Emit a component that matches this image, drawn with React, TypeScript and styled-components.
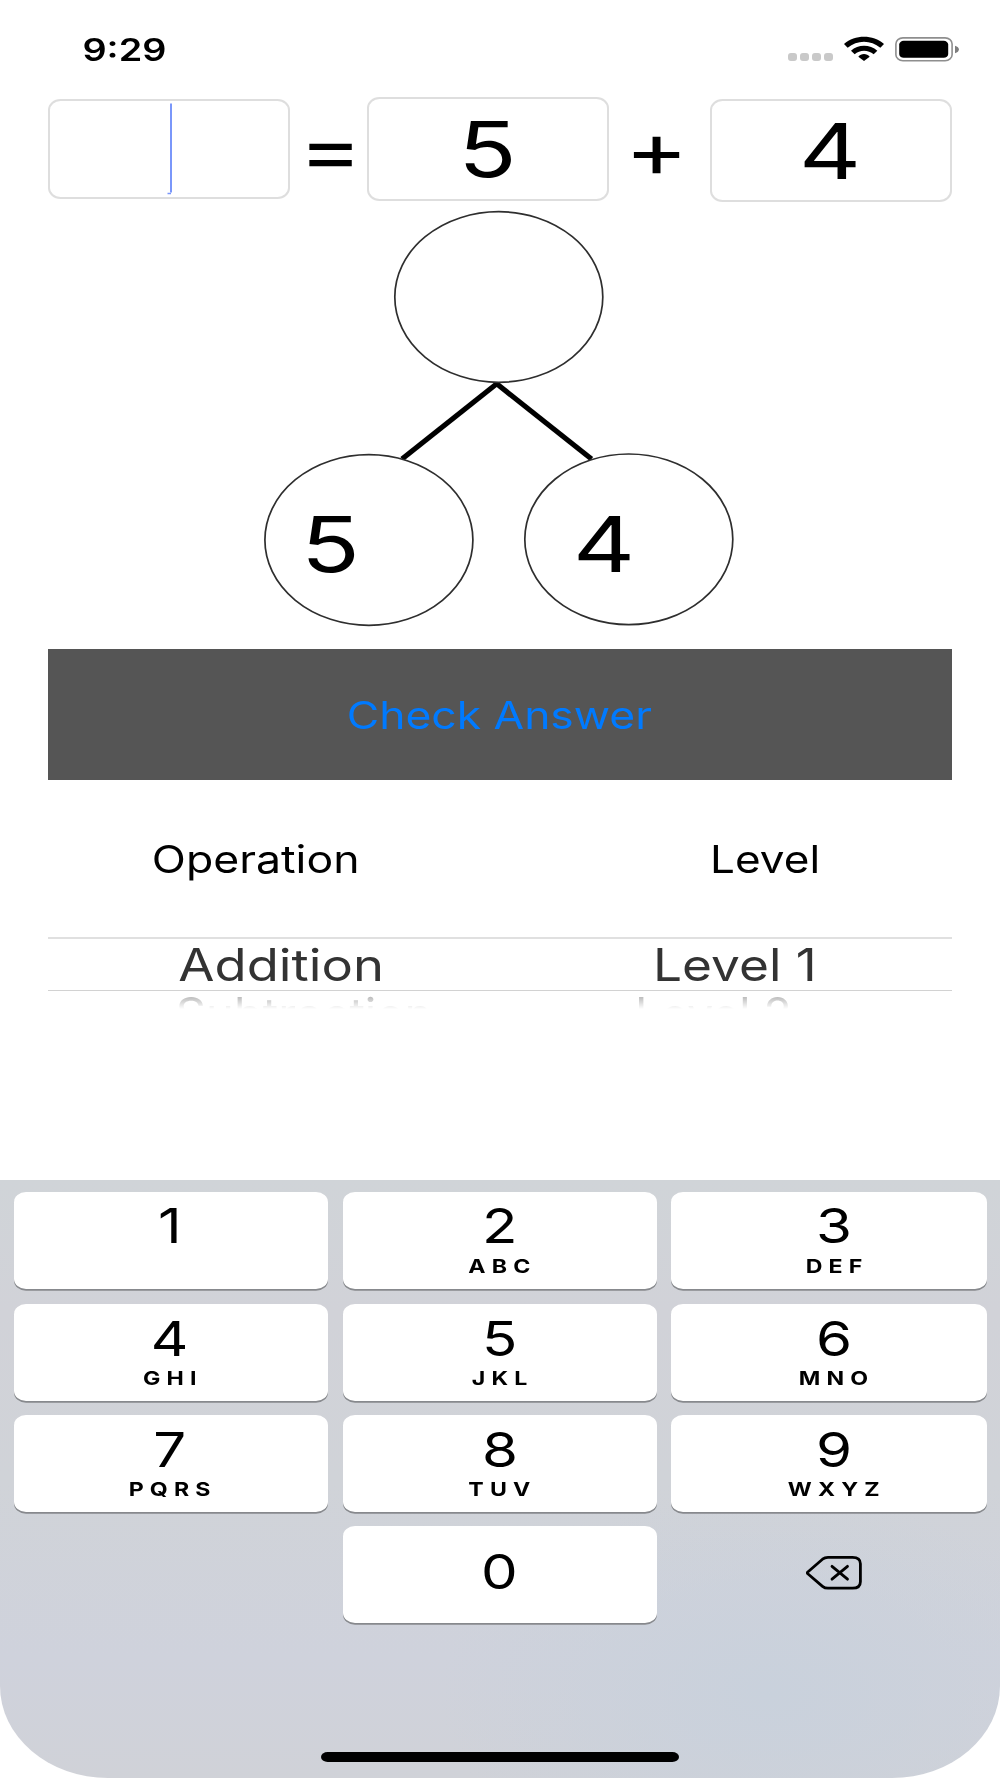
import React from "react";
import styled, { createGlobalStyle } from "styled-components";

const GlobalStyle = createGlobalStyle`
  body {
    margin: 0;
    background: #fff;
  }
  * {
    box-sizing: border-box;
  }
`;

const Screen = styled.main`
  width: 1000px;
  height: 1778px;
  display: flex;
  flex-direction: column;
  overflow: hidden;
  background: #fff;
  color: #000;
  font-family: Inter, "Liberation Sans", sans-serif;
`;

/* Text with the wide letterforms used across the whole screen. */
const Wide = styled.span<{ $stretch?: number; $shift?: number }>`
  display: inline-block;
  white-space: nowrap;
  margin-left: ${(p) => (p.$shift ?? 0) * 2}px;
  transform: scaleX(${(p) => p.$stretch ?? 1.2});
`;

const StatusBar = styled.header`
  height: 97px;
  flex: none;
  display: flex;
  justify-content: space-between;
  padding: 29px 40px 0 74.5px;
`;

const Clock = styled.div`
  width: 100px;
  padding-top: 1px;
  text-align: center;
  font-size: 31px;
  font-weight: 600;
  line-height: 40px;
`;

const StatusIcons = styled.div`
  display: flex;
  align-items: flex-start;
  padding-top: 7px;
`;

const SignalDots = styled.div`
  display: flex;
  gap: 3px;
  margin: 17px 11px 0 0;
`;

const SignalDot = styled.i`
  width: 9px;
  height: 7.5px;
  border-radius: 3px;
  background: #c9c9c9;
`;

const EquationRow = styled.section`
  flex: none;
  height: 104px;
  display: flex;
  align-items: flex-start;
  padding-left: 48px;
`;

const Field = styled.div<{ $top?: number; $height: number }>`
  width: 242px;
  height: ${(p) => p.$height}px;
  margin-top: ${(p) => p.$top ?? 0}px;
  flex: none;
  display: flex;
  align-items: center;
  justify-content: center;
  border: 2px solid #dedede;
  border-radius: 12.5px / 11px;
  font-size: 77.5px;
  line-height: 90px;
`;

const Sign = styled.div<{ $width: number }>`
  width: ${(p) => p.$width}px;
  flex: none;
  text-align: center;
  font-size: 77.5px;
  line-height: 105px;
`;

const Caret = styled.svg`
  width: 6px;
  height: 92px;
`;

const Bond = styled.svg`
  flex: none;
  display: block;
  width: 1000px;
  height: 448px;
  font-size: 77.5px;
`;

const CheckButton = styled.button`
  flex: none;
  height: 130.5px;
  margin: 0 48px;
  padding: 1px 0 0;
  border: 0;
  background: #555;
  color: #007aff;
  font: 400 38.5px/130px Inter, "Liberation Sans", sans-serif;
`;

const Headings = styled.div`
  flex: none;
  height: 157.5px;
  display: flex;
  padding: 54.5px 0 0 105.5px;
  font-size: 38.5px;
  line-height: 50px;
`;

const Heading = styled.div<{ $left?: number; $width: number }>`
  width: ${(p) => p.$width}px;
  margin-left: ${(p) => p.$left ?? 0}px;
  text-align: center;
`;

const Picker = styled.section`
  flex: none;
  margin: 0 48px;
  height: 243px;
  font-size: 44.5px;
`;

const PickerRow = styled.div`
  height: 54px;
  display: flex;
  border-top: 2px solid #e0e0e0;
  border-bottom: 1px solid #d2d2d2;
  color: #333;
  line-height: 53px;
`;

const PickerNextRow = styled.div`
  height: 18px;
  display: flex;
  overflow: hidden;
  color: #b4b4b4;
  line-height: 47px;
  mask-image: linear-gradient(#000 25%, rgba(0, 0, 0, 0.12) 90%, transparent);
`;

const PickerCell = styled.div<{ $left?: number; $width: number }>`
  width: ${(p) => p.$width}px;
  margin-left: ${(p) => p.$left ?? 0}px;
  display: flex;
  justify-content: center;
`;

const Keyboard = styled.section`
  position: relative;
  flex: 1;
  padding: 12.4px 13px 0 14.4px;
  border-radius: 0 0 108px 108px / 0 0 92px 92px;
  background:
    radial-gradient(ellipse 330px 200px at 77% 86%, #c9d1dc 0%, #c9d1dc00 100%),
    linear-gradient(#d0d4d8, #d1d2d8 22%, #d0d3d8 50%, #cfd2dc 80%, #d0d2d8);
`;

const KeyGrid = styled.div`
  display: grid;
  grid-template-columns: 314px 314px 315.5px;
  grid-auto-rows: 97px;
  gap: 14.2px 14.4px;
`;

const Key = styled.div<{ $top: number; $offset: number; $blank?: boolean }>`
  display: flex;
  flex-direction: column;
  align-items: center;
  padding-top: ${(p) => p.$top}px;
  padding-left: ${(p) => Math.max(0, p.$offset * 2)}px;
  padding-right: ${(p) => Math.max(0, -p.$offset * 2)}px;
  border-radius: 12px / 10px;
  background: ${(p) => (p.$blank ? "transparent" : "#fff")};
  box-shadow: ${(p) => (p.$blank ? "none" : "0 1.7px 0 #87898d")};
`;

const Digit = styled.div`
  height: 50px;
  font-size: 48.5px;
  line-height: 50px;
`;

const Letters = styled.div<{ $gap: number }>`
  margin-top: ${(p) => p.$gap}px;
  padding-left: 5.5px;
  font-size: 19.3px;
  font-weight: 700;
  letter-spacing: 5.1px;
  line-height: 20px;
`;

const HomeIndicator = styled.div`
  position: absolute;
  left: 321px;
  bottom: 16px;
  width: 358px;
  height: 10.5px;
  border-radius: 7px / 5.25px;
  background: #000;
`;

const WifiIcon = () => (
  <svg width="40" height="25" viewBox="222 48 120 75">
    <path d="M222 72C255 43 309 43 342 72L331 83C303 59 261 59 233 83Z" />
    <path d="M243 92C264 72 300 72 322 92L311 103C295 89 269 89 254 103Z" />
    <path d="M265 110C273 99 291 99 299 110L282 123Z" />
  </svg>
);

const Battery = styled.svg`
  width: 65px;
  height: 26px;
  margin-left: 11px;
`;

const BatteryIcon = () => (
  <Battery viewBox="0 0 65 26">
    <rect x="0.9" y="1.9" width="56.2" height="22.8" rx="7" ry="6" fill="none" stroke="#8e8e8e" strokeWidth="1.6" />
    <rect x="4.2" y="4.8" width="49" height="17" rx="4.5" ry="3.8" />
    <path d="M60 9.8C65.200 11.200 65.200 15.800 60 17.200Z" fill="#7d7d7d" />
  </Battery>
);

const BackspaceIcon = () => (
  <svg width="56" height="34" viewBox="0 0 56 34" fill="none" stroke="#000" strokeWidth="2.800" strokeLinecap="round" strokeLinejoin="round">
    <path d="M1.800 16L16.500 3.200Q18.800 1.400 22 1.400H46.500Q54.400 1.400 54.400 7.800V25.700Q54.400 32.200 46.500 32.200H22Q18.800 32.200 16.500 30.300L1.800 17.800Q.8 16.900 1.800 16Z" />
    <path d="M26 10.300L41.500 23.200M41.500 10.300L26 23.200" />
  </svg>
);

const keys = [
  ["1", ""], ["2", "ABC"], ["3", "DEF"],
  ["4", "GHI"], ["5", "JKL"], ["6", "MNO"],
  ["7", "PQRS"], ["8", "TUV"], ["9", "WXYZ"],
];

/* Labels sit slightly off the key centres in the outer columns. */
const columnOffsets = [-1.5, 0, 5];

export default function App() {
  return (
    <Screen>
      <GlobalStyle />
      <StatusBar>
        <Clock>
          <Wide $stretch={1.22}>9:29</Wide>
        </Clock>
        <StatusIcons>
          <SignalDots>
            <SignalDot />
            <SignalDot />
            <SignalDot />
            <SignalDot />
          </SignalDots>
          <WifiIcon />
          <BatteryIcon />
        </StatusIcons>
      </StatusBar>

      <EquationRow>
        <Field $top={2} $height={100}>
          <Caret viewBox="0 0 6 92" fill="none" stroke="#7a97fa">
            <path d="M5 .5V89.500" strokeWidth="2" />
            <path d="M1.500 90.500H5" strokeWidth="1.500" />
          </Caret>
        </Field>
        <Sign $width={77}>
          <Wide $stretch={1.24} $shift={2.3}>=</Wide>
        </Sign>
        <Field $height={104}>
          <Wide $stretch={1.24}>5</Wide>
        </Field>
        <Sign $width={101}>
          <Wide $stretch={1.24} $shift={-2.4}>+</Wide>
        </Sign>
        <Field $top={2} $height={103.4}>
          <Wide $stretch={1.24} $shift={-0.5}>4</Wide>
        </Field>
      </EquationRow>

      <Bond viewBox="0 201 1000 448">
        <g stroke="#000" strokeWidth="5.200">
          <path d="M498 382.800L402 459" />
          <path d="M495.500 382.800L591.500 459" />
        </g>
        <g fill="#fff" stroke="#2e2e2e" strokeWidth="1.700">
          <ellipse cx="498.800" cy="297" rx="104" ry="85.300" />
          <ellipse cx="368.900" cy="540" rx="104" ry="85.300" />
          <ellipse cx="628.800" cy="539.300" rx="104" ry="85.300" />
        </g>
        <g textAnchor="middle">
          <text transform="translate(330.500 571.700) scale(1.250 1)">5</text>
          <text transform="translate(604 571.700) scale(1.240 1)">4</text>
        </g>
      </Bond>

      <CheckButton>
        <Wide $stretch={1.153} $shift={-0.5}>Check Answer</Wide>
      </CheckButton>

      <Headings>
        <Heading $width={300}>
          <Wide $stretch={1.158}>Operation</Wide>
        </Heading>
        <Heading $left={209.5} $width={300}>
          <Wide $stretch={1.145}>Level</Wide>
        </Heading>
      </Headings>

      <Picker>
        <PickerRow>
          <PickerCell $left={83} $width={300}>
            <Wide $stretch={1.18}>Addition</Wide>
          </PickerCell>
          <PickerCell $left={154} $width={300}>
            <Wide $stretch={1.155}>Level 1</Wide>
          </PickerCell>
        </PickerRow>
        <PickerNextRow>
          <PickerCell $left={106.5} $width={300}>
            <Wide $stretch={1.06}>Subtraction</Wide>
          </PickerCell>
          <PickerCell $left={109} $width={300}>
            <Wide $stretch={1.04}>Level 2</Wide>
          </PickerCell>
        </PickerNextRow>
      </Picker>

      <Keyboard>
        <KeyGrid>
          {keys.map(([digit, letters], i) => (
            <Key key={digit} $top={i < 3 ? 8.5 : 10} $offset={columnOffsets[i % 3]}>
              <Digit>
                <Wide>{digit}</Wide>
              </Digit>
              {letters && (
                <Letters $gap={i < 3 ? 5 : 4}>
                  <Wide>{letters}</Wide>
                </Letters>
              )}
            </Key>
          ))}
          <Key $top={0} $offset={0} $blank />
          <Key $top={21} $offset={-0.5}>
            <Digit>
              <Wide>0</Wide>
            </Digit>
          </Key>
          <Key $top={30} $offset={5.2} $blank>
            <BackspaceIcon />
          </Key>
        </KeyGrid>
        <HomeIndicator />
      </Keyboard>
    </Screen>
  );
}
